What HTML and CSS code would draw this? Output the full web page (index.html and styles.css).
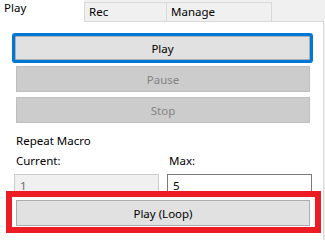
FILE: index.html
```html
<!DOCTYPE html>
<html lang="en">
<head>
    <meta charset="UTF-8">
    <title>Macro Player</title>
    <link rel="stylesheet" href="styles.css">
</head>
<body>
    <div class="tabs">
        <div class="tab active">Play</div>
        <div class="tab rec">Rec</div>
        <div class="tab manage">Manage</div>
    </div>

    <div class="panel">
        <button class="btn focused">Play</button>
        <button class="btn pause" disabled>Pause</button>
        <button class="btn stop" disabled>Stop</button>

        <div class="section-title">Repeat Macro</div>
        <div class="repeat">
            <label class="field">
                <span>Current:</span>
                <input type="text" value="1" disabled>
            </label>
            <label class="field">
                <span>Max:</span>
                <input type="text" value="5">
            </label>
        </div>

        <button class="btn loop">Play (Loop)</button>

        <!-- red annotation frame over the loop button -->
        <div class="highlight"></div>
    </div>
</body>
</html>
```

FILE: styles.css
```css
body {
    margin: 0;
    width: 325px;
    height: 240px;
    overflow: hidden;
    background: #f0f0f0;
    font: 11.5px "Segoe UI", "Noto Sans", sans-serif;
    color: #000;
}

/* Tabs........................................................ */

.tabs {
    display: flex;
    align-items: flex-end;
    height: 21px;
}
.tab {
    box-sizing: border-box;
    height: 19px;
    padding-left: 4px;
    line-height: 18px;
    background: #f0f0f0;
    border: 1px solid #d9d9d9;
    border-bottom: none;
}
.tab.active {
    position: relative;
    z-index: 1;
    width: 84px;
    height: 22px;
    margin-bottom: -1px;
    padding-left: 4px;
    line-height: 16px;
    background: #fff;
    border: none;
}
.tab.rec {
    width: 83px;
}
.tab.manage {
    width: 105px;
    border-left: none;
}

/* Panel....................................................... */

.panel {
    position: relative;
    box-sizing: border-box;
    width: 324px;
    height: 219px;
    padding-top: 14px;
    background: #fff;
    border-top: 1px solid #d9d9d9;
    border-right: 1px solid #d9d9d9;
}

.btn {
    display: block;
    box-sizing: border-box;
    width: 294px;
    height: 26px;
    margin: 0 0 0 16px;
    padding: 0;
    font: inherit;
    color: #000;
    background: #e1e1e1;
    border: 1px solid #adadad;
}
.btn.focused {
    width: 295px;
    height: 24px;
    margin-left: 15px;
    box-shadow: 0 0 0 3px #0078d7;
    border-radius: 1px;
}
.btn:disabled {
    color: #838383;
    background: #cccccc;
    border-color: #bfbfbf;
}
.btn.pause {
    margin-top: 6px;
}
.btn.stop {
    margin-top: 5px;
}
.btn.loop {
    margin-top: 3px;
}

.section-title {
    margin-top: 10px;
    padding-left: 16px;
    line-height: 16px;
}

.repeat {
    display: grid;
    grid-template-columns: 145px 145px;
    column-gap: 8px;
    margin: 4px 0 0 14px;
}
.field span {
    display: block;
    padding-left: 2px;
    line-height: 16px;
}
.field input {
    display: block;
    box-sizing: border-box;
    width: 145px;
    height: 23px;
    margin-top: 5px;
    padding: 0 0 0 5px;
    font: inherit;
    color: #000;
    background: #fff;
    border: 1px solid #7a7a7a;
    outline: none;
}
.field input:disabled {
    color: #6d6d6d;
    background: #f0f0f0;
    border-color: #cccccc;
}

.highlight {
    position: absolute;
    left: 6px;
    top: 169px;
    box-sizing: border-box;
    width: 315px;
    height: 42px;
    border: 6px solid #ed1c24;
}
```
